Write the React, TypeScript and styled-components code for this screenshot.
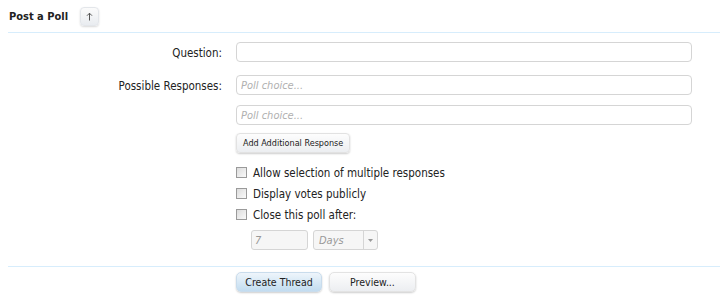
import * as React from 'react';
import styled, { createGlobalStyle } from 'styled-components';

const GlobalStyle = createGlobalStyle`
  html, body {
    margin: 0;
    padding: 0;
    background: #ffffff;
  }
  body {
    font-family: 'DejaVu Sans Condensed', 'DejaVu Sans', sans-serif;
    font-stretch: condensed;
    font-size: 11px;
    color: #000;
  }
`;

const App = () => {
  return (
    <>
      <GlobalStyle />
      <Page>
        <Header>
          <Title>Post a Poll</Title>
          <CollapseButton>
            <svg width="7" height="9" viewBox="0 0 7 9">
              <path d="M3.5 8.5V1.2M1 3.7l2.5-2.5 2.5 2.5" stroke="#555" strokeWidth="1" fill="none" />
            </svg>
          </CollapseButton>
        </Header>

        <Form>
          <Row>
            <Label>Question:</Label>
            <Field>
              <TextInput />
            </Field>
          </Row>
          <Row>
            <Label>Possible Responses:</Label>
            <Field>
              <TextInput placeholder="Poll choice..." />
              <TextInput placeholder="Poll choice..." />
              <SmallButton>Add Additional Response</SmallButton>
            </Field>
          </Row>
          <Row>
            <Label />
            <Field>
              <Options>
                <CheckRow>
                  <Box />
                  Allow selection of multiple responses
                </CheckRow>
                <CheckRow>
                  <Box />
                  Display votes publicly
                </CheckRow>
                <CheckRow>
                  <Box />
                  Close this poll after:
                </CheckRow>
                <Dependent>
                  <NumberInput placeholder="7" />
                  <Select>
                    <SelectText>Days</SelectText>
                    <SelectArrow>
                      <svg width="5" height="3" viewBox="0 0 5 3">
                        <path d="M0 0h5L2.5 3z" fill="#999" />
                      </svg>
                    </SelectArrow>
                  </Select>
                </Dependent>
              </Options>
            </Field>
          </Row>
        </Form>

        <Footer>
          <Label />
          <Actions>
            <PrimaryButton>Create Thread</PrimaryButton>
            <Button>Preview...</Button>
          </Actions>
        </Footer>
      </Page>
    </>
  );
};

const Page = styled.div`
  width: 720px;
  height: 300px;
  padding-left: 8px;
  box-sizing: border-box;
  overflow: hidden;
`;

const Header = styled.div`
  display: flex;
  align-items: center;
  gap: 12px;
  height: 33px;
  padding-top: 1px;
  box-sizing: border-box;
  border-bottom: 1px solid #d7edfc;
`;

const Title = styled.h3`
  margin: 0;
  padding-left: 1px;
  font-size: 11px;
  font-weight: 600;
  color: #222;
`;

const CollapseButton = styled.div`
  width: 19px;
  height: 19px;
  display: flex;
  align-items: center;
  justify-content: center;
  border-radius: 4px;
  background: linear-gradient(#fbfbfb, #e9ecf0);
  border: 1px solid #e3e6ea;
  box-sizing: border-box;
  box-shadow: 0 1px 2px rgba(0, 0, 0, 0.15);
`;

const Form = styled.div`
  display: flex;
  flex-direction: column;
  gap: 13px;
  padding-top: 9px;
  height: 234px;
  box-sizing: border-box;
  border-bottom: 1px solid #d7edfc;
`;

const Row = styled.div`
  display: flex;
  gap: 14px;
`;

const Label = styled.div`
  width: 214px;
  flex-shrink: 0;
  text-align: right;
  padding-top: 4px;
  font-size: 11.5px;
  color: #222;
`;

const Field = styled.div`
  display: flex;
  flex-direction: column;
  align-items: flex-start;
  gap: 10px;
`;

const TextInput = styled.input`
  width: 456px;
  height: 20px;
  box-sizing: border-box;
  border: 1px solid #d5d5d5;
  border-radius: 4px;
  background: #fff;
  padding: 0 4px;
  font: inherit;
  font-size: 11px;

  &::placeholder {
    color: #b0b0b0;
    font-style: italic;
  }
`;

const SmallButton = styled.div`
  margin-top: -2px;
  height: 18px;
  padding: 0 6px;
  display: flex;
  align-items: center;
  font-size: 9px;
  color: #222;
  border-radius: 4px;
  border: 1px solid #e2e2e2;
  background: linear-gradient(#fdfdfd, #eceef1);
  box-shadow: 0 1px 2px rgba(0, 0, 0, 0.2);
`;

const Options = styled.div`
  display: flex;
  flex-direction: column;
  gap: 6px;
  margin-top: -1px;
`;

const CheckRow = styled.label`
  display: flex;
  align-items: center;
  gap: 6px;
  height: 15px;
  font-size: 11.5px;
  color: #222;
`;

const Box = styled.span`
  width: 11px;
  height: 11px;
  box-sizing: border-box;
  border: 1px solid #9a9a9a;
  background: linear-gradient(135deg, #dcdcdc, #fafafa);
`;

const Dependent = styled.div`
  display: flex;
  gap: 5px;
  padding-left: 15px;
  margin-top: 2px;
`;

const NumberInput = styled.input`
  width: 57px;
  height: 20px;
  box-sizing: border-box;
  border: 1px solid #d5d5d5;
  border-radius: 3px;
  background: #f6f6f6;
  padding: 0 3px;
  font: inherit;
  font-size: 11px;

  &::placeholder {
    color: #999;
    font-style: italic;
  }
`;

const Select = styled.div`
  width: 65px;
  height: 20px;
  box-sizing: border-box;
  border: 1px solid #d5d5d5;
  border-radius: 3px;
  background: #f6f6f6;
  display: flex;
  align-items: stretch;
`;

const SelectText = styled.span`
  flex: 1;
  display: flex;
  align-items: center;
  padding-left: 5px;
  color: #999;
  font-style: italic;
`;

const SelectArrow = styled.span`
  width: 13px;
  border-left: 1px solid #d5d5d5;
  display: flex;
  align-items: center;
  justify-content: center;
`;

const Footer = styled.div`
  display: flex;
  gap: 14px;
  padding-top: 5px;
`;

const Actions = styled.div`
  display: flex;
  gap: 7px;
`;

const Button = styled.div`
  width: 87px;
  height: 20px;
  box-sizing: border-box;
  display: flex;
  align-items: center;
  justify-content: center;
  font-size: 10.5px;
  color: #222;
  border-radius: 5px;
  border: 1px solid #e3e3e3;
  background: linear-gradient(#fdfdfd, #eceef1);
  box-shadow: 0 1px 2px rgba(0, 0, 0, 0.2);
`;

const PrimaryButton = styled(Button)`
  width: 86px;
  border-color: #c9dcec;
  background: linear-gradient(#eef5fb, #c2dcf0);
`;

export default App;
